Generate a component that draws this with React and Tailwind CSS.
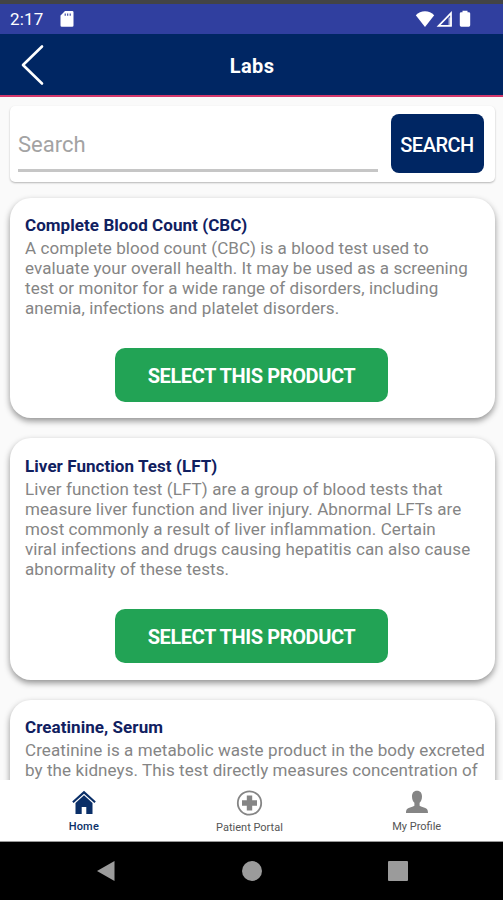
import clsx from 'clsx'

const LABS = [
  {
    name: 'Complete Blood Count (CBC)',
    spacing: 'pt-[16px] pb-[16px]',
    lines: [
      'A complete blood count (CBC) is a blood test used to',
      'evaluate your overall health. It may be used as a screening',
      'test or monitor for a wide range of disorders, including',
      'anemia, infections and platelet disorders.',
    ],
  },
  {
    name: 'Liver Function Test (LFT)',
    spacing: 'pt-[17px] pb-[17px]',
    lines: [
      'Liver function test (LFT) are a group of blood tests that',
      'measure liver function and liver injury. Abnormal LFTs are',
      'most commonly a result of liver inflammation. Certain',
      'viral infections and drugs causing hepatitis can also cause',
      'abnormality of these tests.',
    ],
  },
  {
    name: 'Creatinine, Serum',
    spacing: 'pt-[16px] pb-[60px]',
    folded: true,
    lines: [
      'Creatinine is a metabolic waste product in the body excreted',
      'by the kidneys. This test directly measures concentration of',
    ],
  },
]

/* ── Status Bar ───────────────────────────────────────── */
function StatusBar() {
  return (
    <div className="flex h-[34px] shrink-0 items-center border-t-[4px] border-[#434446] bg-[#303f9f] pl-[10px] pr-[32px] text-white">
      <span className="text-[17px] leading-none tracking-[0.2px]">2:17</span>
      <svg className="ml-[16px]" width="14" height="18" viewBox="0 0 14 18">
        <path d="M5 1h7.2a1.3 1.3 0 0 1 1.3 1.3v13.2a1.3 1.3 0 0 1-1.3 1.3H1.8a1.3 1.3 0 0 1-1.3-1.3V5.6z" fill="currentColor" />
        <path d="M5.2 3.4v2.4M7.7 3.4v2.4M10.2 3.4v2.4" stroke="#303f9f" strokeWidth="1.1" />
      </svg>
      <div className="ml-auto flex items-center">
        <svg width="20" height="18" viewBox="0 0 20 18">
          <path d="M10 17L.8 5.3C3.3 2.6 6.5 1.2 10 1.2s6.7 1.4 9.2 4.1z" fill="currentColor" />
        </svg>
        <svg className="ml-px" width="17" height="18" viewBox="0 0 17 18">
          <path d="M2.6 15.9L15 3.2v12.7z" fill="none" stroke="currentColor" strokeWidth="1.7" />
          <path d="M12.5 7.5h3.3v8.500h-3.300z" fill="currentColor" opacity=".6" />
        </svg>
        <svg className="ml-[6px]" width="12" height="18" viewBox="0 0 12 18">
          <path d="M3.5 2.2V.8h5v1.4h1.3a1.4 1.4 0 0 1 1.4 1.4v11.7a1.4 1.4 0 0 1-1.4 1.4H2.200a1.4 1.4 0 0 1-1.4-1.4V3.6a1.4 1.4 0 0 1 1.4-1.4z" fill="currentColor" />
        </svg>
      </div>
    </div>
  )
}

/* ── Header ───────────────────────────────────────────── */
function Header() {
  return (
    <header className="grid h-[63px] shrink-0 grid-cols-[1fr_auto_1fr] items-center border-b-2 border-[#d4386c] bg-[#002663] text-white">
      <button aria-label="Back" className="ml-[20px] w-[26px]">
        <svg width="26" height="42" viewBox="0 0 26 42">
          <path d="M22 2.5L3 21l19 18.5" fill="none" stroke="currentColor" strokeWidth="2.6" strokeLinecap="round" strokeLinejoin="round" />
        </svg>
      </button>
      <h1 className="pl-px pt-[2px] text-[20px] font-bold tracking-[0.4px]">Labs</h1>
    </header>
  )
}

/* ── Search ───────────────────────────────────────────── */
function SearchBox() {
  return (
    <div className="flex h-[76px] shrink-0 rounded-[5px] bg-white pl-2 pr-[11px] pt-2 shadow-[0_1px_2px_rgba(0,0,0,0.28)]">
      <div className="flex h-[58px] w-[360px] items-center border-b-[3px] border-[#c6c6c6] pt-[5px] text-[22px] text-[#a3a3a3]">
        Search
      </div>
      <button className="ml-auto h-[59px] w-[93px] rounded-[8px] bg-[#002663] pr-px pt-[3px] text-[20px] font-medium tracking-[-0.5px] text-white">
        SEARCH
      </button>
    </div>
  )
}

/* ── Lab Card ─────────────────────────────────────────── */
function LabCard({ lab }) {
  return (
    <section
      className={clsx(
        'shrink-0 rounded-[21px] bg-white px-[15px] shadow-[0_3px_6px_rgba(0,0,0,0.42)]',
        lab.spacing
      )}
    >
      <h2 className="text-[17px] font-bold leading-[22px] tracking-[0.06px] text-[#10205f]">{lab.name}</h2>
      <p className="whitespace-nowrap pt-[2px] text-[17px] leading-[20px] tracking-[0.085px] text-[#858585]">
        {lab.lines.map((line) => (
          <span key={line} className="block">{line}</span>
        ))}
      </p>
      {!lab.folded && (
        <button className="ml-[90px] mt-[30px] block h-[54px] w-[273px] rounded-[10px] bg-[#22a355] pt-[2px] text-[20px] font-bold tracking-[-0.4px] text-white">
          SELECT THIS PRODUCT
        </button>
      )}
    </section>
  )
}

/* ── Tab Bar ──────────────────────────────────────────── */
function HomeIcon() {
  return (
    <svg width="26" height="26" viewBox="0 0 26 26" fill="#0a2f68">
      <path d="M13 .8L1.2 11.5l1.4 1.600L13 3.8l10.4 9.300 1.400-1.600z" />
      <path d="M13 5.3L4.500 12.900V24h6.200v-7h4.600v7h6.200V12.900z" />
    </svg>
  )
}

function PortalIcon() {
  return (
    <svg width="27" height="27" viewBox="0 0 27 27">
      <circle cx="13.5" cy="13" r="11.7" fill="none" stroke="#858585" strokeWidth="1.8" />
      <path d="M10.8 5.500h5.400v4.800H21v5.400h-4.800v4.800h-5.400v-4.800H6v-5.400h4.800z" fill="#858585" />
    </svg>
  )
}

function ProfileIcon() {
  return (
    <svg width="24" height="24" viewBox="0 0 24 24" fill="#858585">
      <path d="M12 .8c3.400 0 5 2.300 5 5.700 0 2.800-1 5-2.400 6.300v3c1 .8 3 1.300 5 2 2.200.8 3.400 1.700 3.400 5.200H1c0-3.500 1.200-4.400 3.400-5.200 2-.7 4-1.200 5-2v-3C8 11.500 7 9.300 7 6.500 7 3.100 8.600.8 12 .8z" />
    </svg>
  )
}

const TABS = [
  { label: 'Home', Icon: HomeIcon, active: true, spacing: 'gap-[4px]' },
  { label: 'Patient Portal', Icon: PortalIcon, spacing: 'gap-[4px] pr-[4px]' },
  { label: 'My Profile', Icon: ProfileIcon, spacing: 'gap-[6px] pr-[5px]' },
]

function TabBar() {
  return (
    <nav className="grid h-[62px] shrink-0 grid-cols-3 border-b border-[#999] bg-white">
      {TABS.map(({ label, Icon, active, spacing }) => (
        <button key={label} className={clsx('flex flex-col items-center pt-[10px]', spacing)}>
          <Icon />
          <span
            className={clsx(
              'text-[11px] leading-[14px]',
              active ? 'font-medium tracking-[0.2px] text-[#0a2f68]' : 'text-[#555]'
            )}
          >
            {label}
          </span>
        </button>
      ))}
    </nav>
  )
}

/* ── System Navigation ────────────────────────────────── */
function SystemNav() {
  return (
    <div className="flex h-[58px] shrink-0 items-center justify-between bg-black pl-[96px] pr-[95px] text-[#9b9b9b]">
      <svg width="19" height="22" viewBox="0 0 19 22" fill="currentColor">
        <path d="M1 11L18.5 1v20z" />
      </svg>
      <div className="size-[20px] rounded-full bg-current" />
      <div className="size-[20px] rounded-[1px] bg-current" />
    </div>
  )
}

export default function App() {
  return (
    <div className="flex h-[900px] w-[503px] flex-col overflow-hidden bg-[#fafafa] font-['Roboto',sans-serif]">
      <StatusBar />
      <Header />
      <main className="flex min-h-0 flex-1 flex-col overflow-hidden pl-[10px] pr-[8px] pt-[9px]">
        <SearchBox />
        <div className="mt-[16px] flex flex-col gap-[20px]">
          {LABS.map((lab) => (
            <LabCard key={lab.name} lab={lab} />
          ))}
        </div>
      </main>
      <TabBar />
      <SystemNav />
    </div>
  )
}
